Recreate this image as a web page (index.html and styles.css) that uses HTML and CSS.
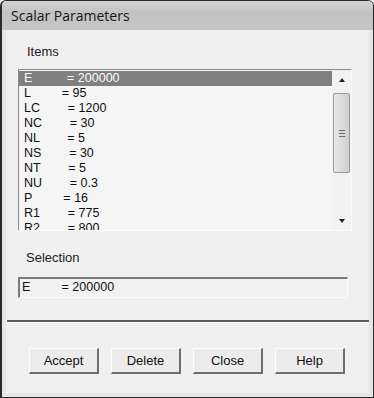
FILE: index.html
```html
<!DOCTYPE html>
<html lang="en">
<head>
    <meta charset="UTF-8">
    <meta name="viewport" content="width=device-width, initial-scale=1.0">
    <title>Scalar Parameters</title>
    <link rel="stylesheet" href="styles.css">
</head>
<body>
    <div class="window">
        <div class="titlebar">Scalar Parameters</div>
        <div class="client">
            <div class="group-label">Items</div>
            <div class="listbox">
                <div class="rows">
                    <div class="row selected">E          = 200000</div>
                    <div class="row">L         = 95</div>
                    <div class="row">LC        = 1200</div>
                    <div class="row">NC        = 30</div>
                    <div class="row">NL        = 5</div>
                    <div class="row">NS        = 30</div>
                    <div class="row">NT        = 5</div>
                    <div class="row">NU        = 0.3</div>
                    <div class="row">P         = 16</div>
                    <div class="row">R1        = 775</div>
                    <div class="row">R2        = 800</div>
                </div>
                <div class="scrollbar">
                    <div class="arrow up"></div>
                    <div class="thumb"><span class="grip"></span></div>
                    <div class="arrow down"></div>
                </div>
            </div>
            <div class="group-label selection-label">Selection</div>
            <div class="textbox">E         = 200000</div>
            <div class="separator"></div>
            <div class="buttons">
                <button class="btn">Accept</button>
                <button class="btn">Delete</button>
                <button class="btn">Close</button>
                <button class="btn">Help</button>
            </div>
        </div>
    </div>
</body>
</html>
```

FILE: styles.css
```css
body {
    margin: 0;
    background: #f0f0f0;
    font-family: "Liberation Sans", Arial, sans-serif;
}
.window {
    width: 374px;
    height: 398px;
    box-sizing: border-box;
    border: 1px solid #2a2a2a;
    border-left-width: 2px;
    border-radius: 6px 6px 0 0;
    background: #e6e6e6;
    display: flex;
    flex-direction: column;
    overflow: hidden;
}
.titlebar {
    height: 29px;
    flex-shrink: 0;
    box-sizing: border-box;
    padding-left: 9px;
    display: flex;
    align-items: center;
    font-family: "Open Sans", "Liberation Sans", sans-serif;
    font-size: 14px;
    color: #151515;
    background: linear-gradient(#d4d4d4, #c2c2c2 40%, #c6c6c6);
}
.client {
    flex: 1;
    margin: 0 4px 4px 4px;
    background: #f0f0f0;
    padding-top: 14px;
    display: flex;
    flex-direction: column;
}
.group-label {
    margin-left: 21px;
    height: 15px;
    line-height: 15px;
    font-size: 13px;
    color: #1a1a1a;
}
.listbox {
    margin: 10px 0 0 12px;
    width: 334px;
    height: 162px;
    box-sizing: border-box;
    border: 1px solid;
    border-color: #8a8a8a #fafafa #fafafa #8a8a8a;
    background: #f5f5f5;
    display: flex;
    overflow: hidden;
}
.rows {
    flex: 1;
    padding-top: 1px;
}
.row {
    height: 15px;
    line-height: 15px;
    padding-left: 5px;
    font-size: 12.5px;
    color: #111;
    white-space: pre;
}
.row.selected {
    background: #808080;
    color: #fff;
}
.scrollbar {
    width: 19px;
    display: flex;
    flex-direction: column;
    align-items: center;
    background: #f2f2f2;
}
.arrow {
    height: 20px;
    width: 100%;
    display: flex;
    align-items: center;
    justify-content: center;
}
.arrow::after {
    content: "";
    border-left: 3px solid transparent;
    border-right: 3px solid transparent;
}
.arrow.up::after {
    border-bottom: 4px solid #222;
}
.arrow.down {
    margin-top: auto;
    height: 18px;
}
.arrow.down::after {
    border-top: 4px solid #222;
}
.thumb {
    margin-top: 3px;
    width: 17px;
    height: 80px;
    box-sizing: border-box;
    border: 1px solid #9a9a9a;
    border-radius: 2px;
    background: linear-gradient(90deg, #e8e8e8, #dcdcdc 50%, #cfcfcf);
    display: flex;
    align-items: center;
    justify-content: center;
}
.grip {
    width: 6px;
    height: 7px;
    background: repeating-linear-gradient(#6a6a6a 0 1px, transparent 1px 3px);
}
.selection-label {
    margin-top: 19px;
    margin-left: 20px;
}
.textbox {
    margin: 12px 0 0 12px;
    width: 330px;
    height: 21px;
    box-sizing: border-box;
    border-style: solid;
    border-width: 2px 1px 1px 2px;
    border-color: #7a7a7a #fbfbfb #fbfbfb #7a7a7a;
    background: #f1f1f1;
    padding-left: 2px;
    line-height: 17px;
    font-size: 12.5px;
    color: #111;
    white-space: pre;
}
.separator {
    margin: 22px 0 0 1px;
    height: 2px;
    background: #5c5c5c;
    border-bottom: 1px solid #fdfdfd;
}
.buttons {
    margin: 25px 0 0 23px;
    display: flex;
    gap: 12px;
}
.btn {
    width: 70px;
    height: 26px;
    box-sizing: border-box;
    border-style: solid;
    border-width: 1px 2px 2px 1px;
    border-color: #fdfdfd #6e6e6e #6e6e6e #fdfdfd;
    background: #ececec;
    font-family: "Liberation Sans", Arial, sans-serif;
    font-size: 13px;
    color: #111;
    padding: 0;
}
```
